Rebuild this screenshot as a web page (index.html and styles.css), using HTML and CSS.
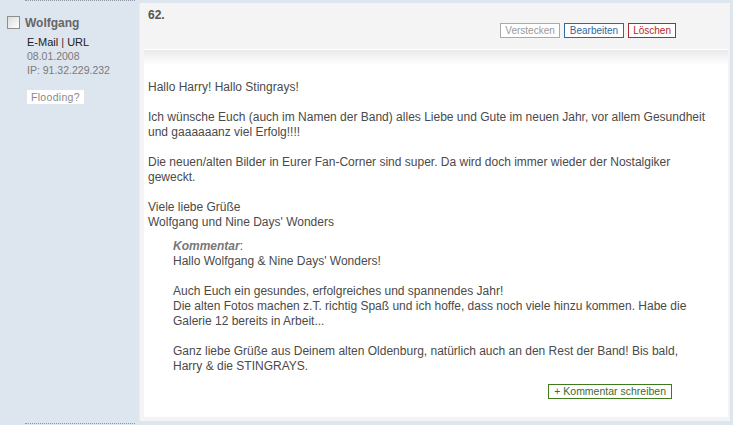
FILE: index.html
```html
<!DOCTYPE html>
<html lang="de">

<head>
    <meta charset="UTF-8">
    <title>Gästebuch</title>
    <link rel="stylesheet" href="styles.css">
</head>

<body>

    <div class="entry">
        <div class="sidebar">
            <div class="rule"></div>
            <div class="author">
                <input type="checkbox" class="select">
                <div class="details">
                    <div class="name">Wolfgang</div>
                    <div class="links"><a href="#">E-Mail</a> | <a href="#">URL</a></div>
                    <div class="meta">08.01.2008</div>
                    <div class="meta">IP: 91.32.229.232</div>
                    <button class="flood">Flooding?</button>
                </div>
            </div>
            <div class="rule bottom"></div>
        </div>

        <div class="post">
            <div class="post-head">
                <span class="number">62.</span>
                <div class="actions">
                    <button class="btn hide">Verstecken</button>
                    <button class="btn edit">Bearbeiten</button>
                    <button class="btn delete">Löschen</button>
                </div>
            </div>
            <div class="post-body">
                <p class="message">
                    Hallo Harry! Hallo Stingrays!<br><br>
                    Ich wünsche Euch (auch im Namen der Band) alles Liebe und Gute im neuen Jahr, vor allem Gesundheit und gaaaaaanz viel Erfolg!!!!<br><br>
                    Die neuen/alten Bilder in Eurer Fan-Corner sind super. Da wird doch immer wieder der Nostalgiker geweckt.<br><br>
                    Viele liebe Grüße<br>
                    Wolfgang und Nine Days' Wonders
                </p>
                <div class="comment">
                    <b>Kommentar</b>:<br>
                    Hallo Wolfgang &amp; Nine Days' Wonders!<br><br>
                    Auch Euch ein gesundes, erfolgreiches und spannendes Jahr!<br>
                    Die alten Fotos machen z.T. richtig Spaß und ich hoffe, dass noch viele hinzu kommen. Habe die Galerie 12 bereits in Arbeit...<br><br>
                    Ganz liebe Grüße aus Deinem alten Oldenburg, natürlich auch an den Rest der Band! Bis bald,<br>
                    Harry &amp; die STINGRAYS.
                </div>
                <div class="reply">
                    <button class="btn write">+ Kommentar schreiben</button>
                </div>
            </div>
        </div>
    </div>

</body>

</html>
```

FILE: styles.css
```css
body {
    margin: 0;
    background: #dde5ef;
    font-family: "Liberation Sans", Arial, sans-serif;
    color: #4a4a4a;
}

.entry {
    display: flex;
    height: 425px;
}

.sidebar {
    width: 139px;
    display: flex;
    flex-direction: column;
}

.rule {
    margin: 0 4px 0 25px;
    border-top: 1px dotted #8d96a3;
}

.rule.bottom {
    margin-top: auto;
    margin-bottom: 1px;
}

.author {
    display: flex;
    padding: 15px 0 0 7px;
}

.select {
    appearance: none;
    width: 13px;
    height: 13px;
    margin: 0 5px 0 0;
    border: 1px solid #8f8f8f;
    background: linear-gradient(135deg, #dcdcdc, #fff);
}

.name {
    font-size: 12px;
    font-weight: bold;
    color: #666;
    margin-bottom: 5px;
}

.links {
    font-size: 11px;
    color: #333;
    padding-left: 2px;
    line-height: 14px;
}

.links a {
    color: #222;
    text-decoration: none;
}

.meta {
    font-size: 10.5px;
    color: #7a7a7a;
    padding-left: 2px;
    line-height: 14px;
}

.flood {
    margin: 13px 0 0 2px;
    padding: 1px 4px;
    font-family: "Liberation Sans", Arial, sans-serif;
    font-size: 10.5px;
    color: #8a8a8a;
    background: #fff;
    border: none;
    letter-spacing: 0.3px;
}

.post {
    flex: 1;
    margin: 3px 3px 4px 1px;
    background: #f4f4f4;
    padding: 0 2px 4px 4px;
    display: flex;
    flex-direction: column;
    box-shadow: -1px 0 0 #e9edf2;
}

.post-head {
    height: 46px;
    padding: 0 52px 0 4px;
    border-bottom: 1px solid #fff;
}

.number {
    display: block;
    padding-top: 5px;
    font-size: 12px;
    font-weight: bold;
    color: #555;
}

.actions {
    display: flex;
    justify-content: flex-end;
    gap: 4px;
    margin-top: 1px;
}

.btn {
    font-family: "Liberation Sans", Arial, sans-serif;
    font-size: 10px;
    padding: 0 4px;
    height: 15px;
    line-height: 13px;
    background: #fff;
    border: 1px solid #aaa;
    color: #999;
    cursor: pointer;
}

.edit {
    border-color: #2d6aa0;
    color: #2d6aa0;
    padding: 0 5px;
}

.delete {
    border-color: #b02a2a;
    color: #b02a2a;
}

.post-body {
    flex: 1;
    background: linear-gradient(#eaeaea, #fff 15px);
    padding: 30px 14px 0 4px;
    font-size: 12px;
    line-height: 15px;
}

.message {
    margin: 0 0 9px 0;
}

.comment {
    margin-left: 25px;
}

.comment b {
    font-style: italic;
    color: #777;
}

.reply {
    display: flex;
    justify-content: flex-end;
    padding: 10px 42px 0 0;
}

.write {
    font-size: 10.5px;
    padding: 0 5px;
    border-color: #3f7a1f;
    color: #3f6a2a;
}
```
